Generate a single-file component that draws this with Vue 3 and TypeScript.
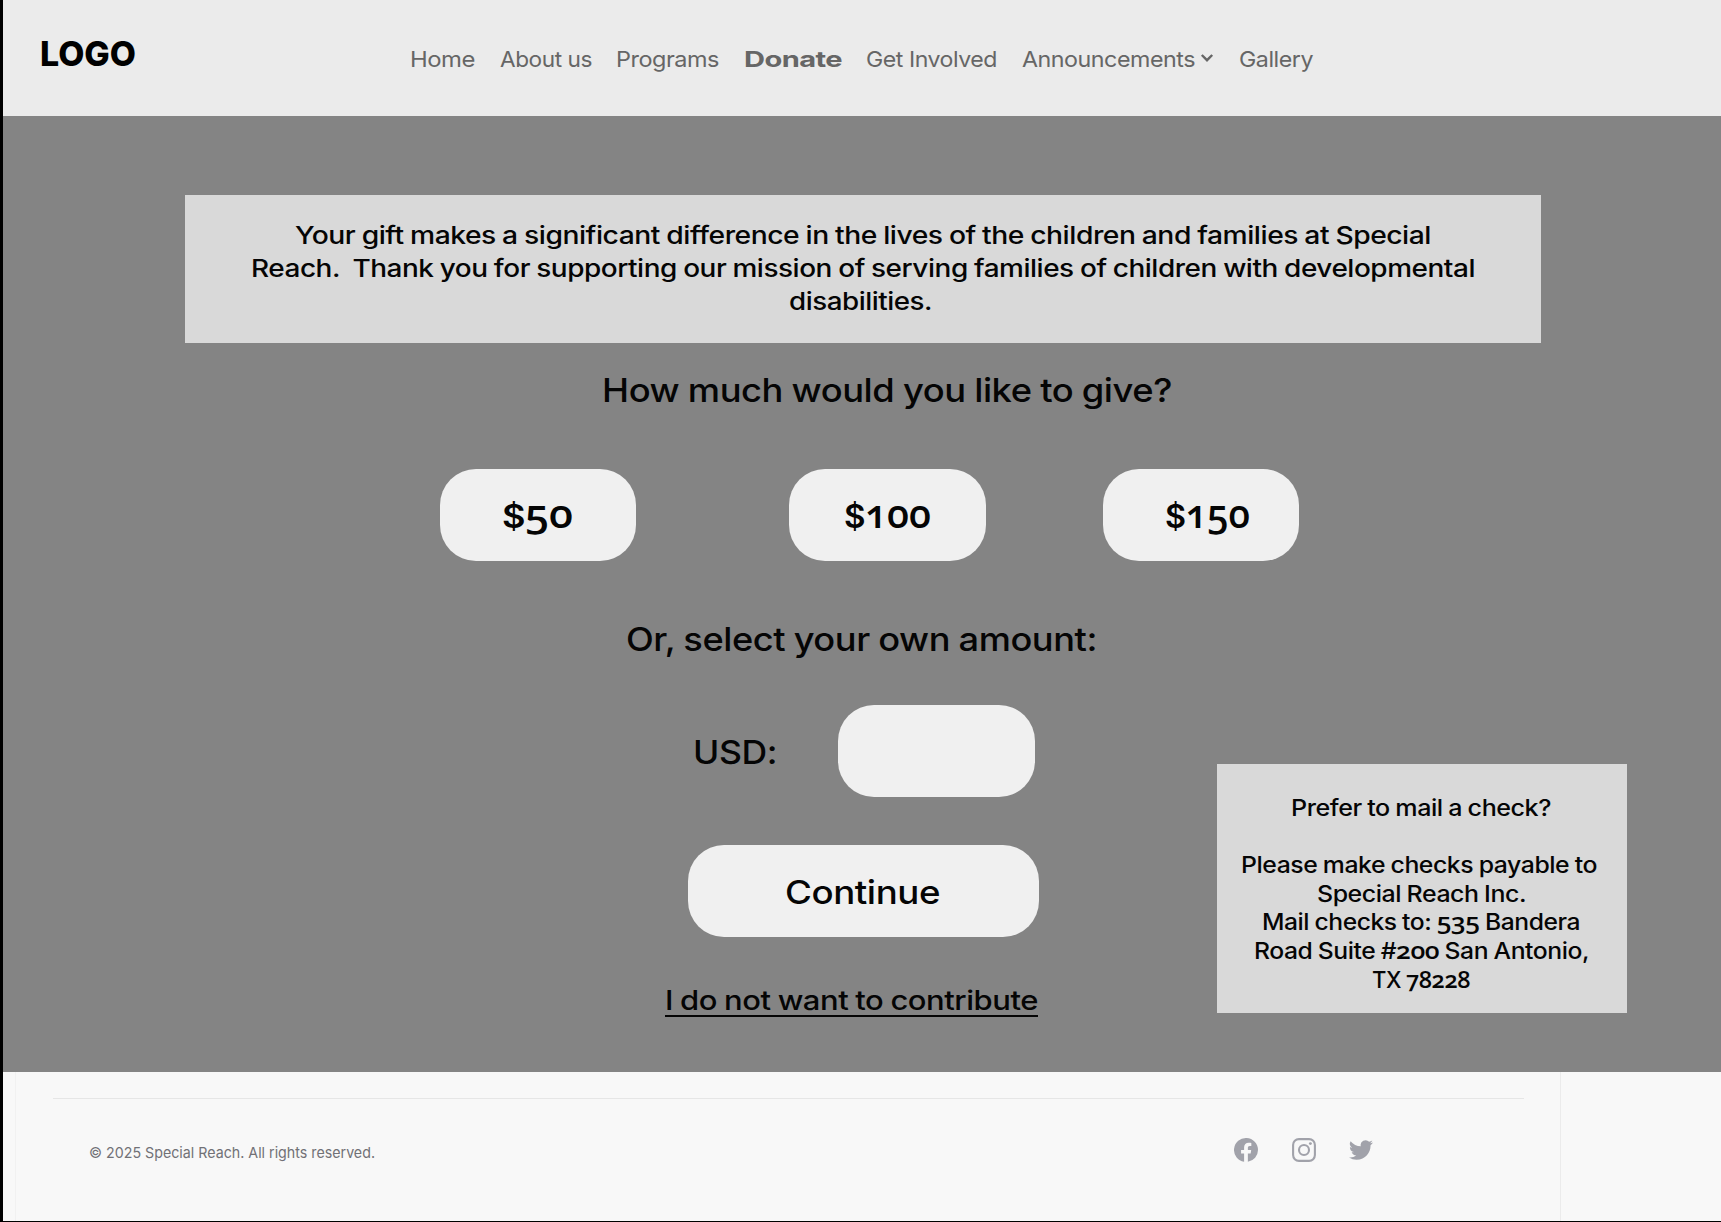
<script setup lang="ts">
import type { Directive } from 'vue'

interface TextLine {
  text: string
  width: number
}

interface NavItem extends TextLine {
  active?: boolean
  menu?: boolean
}

// Widens a line to the given width, keeping its footprint in the flow
const vFit: Directive<HTMLElement, number> = {
  mounted(el, { value }) {
    const natural = el.getBoundingClientRect().width
    el.style.transform = `scaleX(${value / natural})`
    el.style.marginRight = `${value - natural}px`
  }
}

const navItems: NavItem[] = [
  { text: 'Home', width: 65 },
  { text: 'About us', width: 92 },
  { text: 'Programs', width: 103 },
  { text: 'Donate', width: 98 },
  { text: 'Get Involved', width: 131 },
  { text: 'Announcements', width: 173, menu: true },
  { text: 'Gallery', width: 74 }
].map((item) => ({ ...item, active: item.text === 'Donate' }))

const noticeLines: TextLine[] = [
  { text: 'Your gift makes a significant difference in the lives of the children and families at Special', width: 1136 },
  { text: 'Reach.\u00a0 Thank you for supporting our mission of serving families of children with developmental', width: 1224 },
  { text: 'disabilities.', width: 143 }
]

const amounts: TextLine[] = [
  { text: '$50', width: 71 },
  { text: '$100', width: 87 },
  { text: '$150', width: 85 }
]

const mailLines: TextLine[] = [
  { text: 'Please make checks payable to', width: 356 },
  { text: 'Special Reach Inc.', width: 209 },
  { text: 'Mail checks to: 535 Bandera', width: 318 },
  { text: 'Road Suite #200 San Antonio,', width: 335 },
  { text: 'TX 78228', width: 98 }
]

// Numbers are set in old-style figures, so they get their own runs
function runs(text: string) {
  return text
    .split(/(\d+)/)
    .filter(Boolean)
    .map((value) => ({ value, figures: /^\d/.test(value) }))
}
</script>

<template>
  <div class="page">
    <header class="header">
      <div class="logo"><span v-fit="96" class="fit">LOGO</span></div>
      <nav class="nav">
        <a
          v-for="item in navItems"
          :key="item.text"
          :class="['nav-link', { active: item.active }]"
        >
          <span v-fit="item.width" class="fit">{{ item.text }}</span>
          <svg v-if="item.menu" class="chevron" viewBox="0 0 14 10" fill="none">
            <path d="M1.8 2l5.2 5.2L12.2 2" stroke="currentColor" stroke-width="2.4" />
          </svg>
        </a>
      </nav>
    </header>

    <main class="hero">
      <section class="notice">
        <div v-for="line in noticeLines" :key="line.text" class="notice-line">
          <span v-fit="line.width" class="fit">{{ line.text }}</span>
        </div>
      </section>

      <h1 class="heading question"><span v-fit="570" class="fit">How much would you like to give?</span></h1>

      <div class="amounts">
        <button v-for="amount in amounts" :key="amount.text" class="pill amount" type="button">
          <span v-fit="amount.width" class="fit"><span v-for="(run, i) in runs(amount.text)" :key="i" :class="{ figures: run.figures }">{{ run.value }}</span></span>
        </button>
      </div>

      <h2 class="heading own"><span v-fit="471" class="fit">Or, select your own amount:</span></h2>

      <div class="lower">
        <form class="form" @submit.prevent>
          <div class="custom">
            <label class="heading usd-label" for="usd"><span v-fit="84" class="fit">USD:</span></label>
            <input id="usd" class="pill usd-input" type="text" />
          </div>
          <button class="pill continue" type="button">
            <span v-fit="155" class="fit">Continue</span>
          </button>
          <a class="decline"><span v-fit="373" class="fit">I do not want to contribute</span></a>
        </form>

        <aside class="mail">
          <div class="mail-title"><span v-fit="260" class="fit">Prefer to mail a check?</span></div>
          <div v-for="line in mailLines" :key="line.text" class="mail-line">
            <span v-fit="line.width" class="fit"><span v-for="(run, i) in runs(line.text)" :key="i" :class="{ figures: run.figures }">{{ run.value }}</span></span>
          </div>
        </aside>
      </div>
    </main>

    <footer class="footer">
      <div class="footer-inner">
        <div class="footer-row">
          <span class="copyright"><span v-fit="286" class="fit">© 2025 Special Reach. All rights reserved.</span></span>
          <div class="social">
            <svg viewBox="0 0 24 24" fill="currentColor" aria-label="Facebook">
              <path d="M24 12a12 12 0 1 0-13.9 11.85v-8.38H7.08V12h3.02V9.36c0-3.01 1.8-4.67 4.54-4.67 1.31 0 2.68.23 2.68.23v2.96h-1.51c-1.49 0-1.95.92-1.95 1.87V12h3.32l-.53 3.47h-2.79v8.38A12 12 0 0 0 24 12z" />
            </svg>
            <svg viewBox="0 0 24 24" fill="none" stroke="currentColor" aria-label="Instagram">
              <rect x="1.1" y="1.1" width="21.8" height="21.8" rx="5.8" stroke-width="2.1" />
              <circle cx="12" cy="12" r="5" stroke-width="2.1" />
              <circle cx="18.4" cy="5.6" r="1.45" fill="currentColor" stroke="none" />
            </svg>
            <svg viewBox="0 0 24 24" fill="currentColor" aria-label="Twitter">
              <path d="M23.95 4.57a10 10 0 0 1-2.82.77 4.96 4.96 0 0 0 2.16-2.72c-.95.55-2 .95-3.13 1.18a4.92 4.92 0 0 0-8.38 4.48A13.93 13.93 0 0 1 1.64 3.16a4.92 4.92 0 0 0 1.52 6.57 4.9 4.9 0 0 1-2.23-.61v.06a4.92 4.92 0 0 0 3.95 4.83 5 5 0 0 1-2.21.08 4.94 4.94 0 0 0 4.6 3.42A9.87 9.87 0 0 1 0 19.54a13.94 13.94 0 0 0 7.55 2.21c9.05 0 14-7.5 14-13.98 0-.21 0-.42-.02-.63a9.94 9.94 0 0 0 2.46-2.55z" />
            </svg>
          </div>
        </div>
      </div>
    </footer>
  </div>
</template>

<style>
body {
  margin: 0;
}
</style>

<style scoped>
.page {
  box-sizing: border-box;
  width: 1721px;
  height: 1222px;
  border-left: 3px solid #000;
  border-bottom: 1px solid #000;
  display: flex;
  flex-direction: column;
  overflow: hidden;
  font-family: Inter, sans-serif;
  font-weight: 500;
  color: #050505;
  background: #f8f8f8;
}

.fit {
  display: inline-block;
  white-space: nowrap;
  transform-origin: left center;
}

.figures {
  font-family: 'Open Sans', sans-serif;
  font-variant-numeric: oldstyle-nums;
}

/* HEADER */
.header {
  height: 116px;
  flex-shrink: 0;
  display: flex;
  background: #ebebeb;
}

.logo {
  width: 370px;
  padding: 33px 0 0 37px;
  font-size: 34px;
  line-height: 41px;
  font-weight: 800;
  color: #000;
}

.nav {
  display: flex;
  gap: 24.5px;
  padding-top: 43.5px;
  font-size: 22px;
  line-height: 30px;
  font-weight: 400;
  letter-spacing: -0.02em;
  color: #666;
}

.nav-link {
  display: flex;
}

.nav-link.active {
  font-weight: 700;
}

.chevron {
  width: 14px;
  height: 10px;
  margin: 9px 1px 0 5px;
}

/* DONATION AREA */
.hero {
  box-sizing: border-box;
  height: 956px;
  flex-shrink: 0;
  padding-top: 79px;
  background: #848484;
  letter-spacing: -0.025em;
  word-spacing: -0.04em;
}

.notice {
  box-sizing: border-box;
  width: 1356px;
  height: 148px;
  margin-left: 182px;
  padding-top: 23.5px;
  font-size: 24.4px;
  line-height: 33.4px;
  text-align: center;
  background: #d9d9d9;
}

.notice-line:last-child {
  padding-right: 5px;
}

.heading {
  margin: 0;
  font-size: 33px;
  line-height: 40px;
  font-weight: 500;
}

.question {
  margin: 27px 0 0 599px;
}

.amounts {
  display: flex;
  margin: 59px 0 0 437px;
}

.pill {
  box-sizing: border-box;
  width: 196px;
  height: 92px;
  padding: 0;
  border: none;
  border-radius: 36px;
  background: #f0f0f0;
  color: #050505;
  font-family: inherit;
  font-weight: 500;
  font-size: 33px;
  letter-spacing: inherit;
}

.amount {
  padding-right: 2px;
  padding-bottom: 1px;
  font-weight: 600;
  line-height: 46px;
}

.amount .figures {
  font-size: 39px;
  letter-spacing: 0;
}

.amount:nth-child(2) {
  width: 197px;
  margin-left: 153px;
  padding-right: 0;
}

.amount:nth-child(3) {
  margin-left: 117px;
  padding-right: 0;
  padding-left: 13px;
}

.own {
  margin: 58px 0 0 623px;
}

.lower {
  display: flex;
  margin-top: 46px;
}

.form {
  width: 1214px;
  display: flex;
  flex-direction: column;
  align-items: flex-start;
}

.custom {
  display: flex;
  align-items: center;
  gap: 61px;
  padding-left: 690px;
}

.usd-label {
  padding-top: 2px;
}

.usd-input {
  width: 197px;
}

.continue {
  width: 351px;
  margin: 48px 0 47px 685px;
  padding: 2px 3px 0 0;
}

.decline {
  height: 30px;
  padding-top: 1px;
  margin-left: 662px;
  border-bottom: 2px solid #050505;
  font-size: 27px;
  line-height: 32px;
}

.mail {
  box-sizing: border-box;
  width: 410px;
  height: 249px;
  margin-top: 59px;
  padding: 30px 2px 0 0;
  font-size: 22.5px;
  line-height: 28.6px;
  text-align: center;
  background: #d9d9d9;
}

.mail-title {
  height: 28.6px;
  margin-bottom: 28.6px;
}

.mail-line {
  height: 28.6px;
}

.mail-line:nth-child(2) {
  margin-right: 4px;
}

.mail .figures {
  font-size: 24px;
  font-weight: 600;
  line-height: 1;
}

/* FOOTER */
.footer {
  flex: 1;
  display: flex;
  padding-left: 12px;
}

.footer-inner {
  box-sizing: border-box;
  width: 1546px;
  padding: 26px 36px 0 37px;
  border-left: 1px solid #f1f1f1;
  border-right: 1px solid #ebebeb;
}

.footer-row {
  display: flex;
  border-top: 1px solid #e6e6e6;
  padding: 39px 151px 0 36px;
  justify-content: space-between;
}

.copyright {
  padding-top: 5px;
  font-size: 15px;
  line-height: 20px;
  font-weight: 400;
  color: #717176;
}

.social {
  display: flex;
  gap: 33.3px;
  color: #a1a2aa;
}

.social svg {
  width: 24px;
  height: 24px;
}
</style>
